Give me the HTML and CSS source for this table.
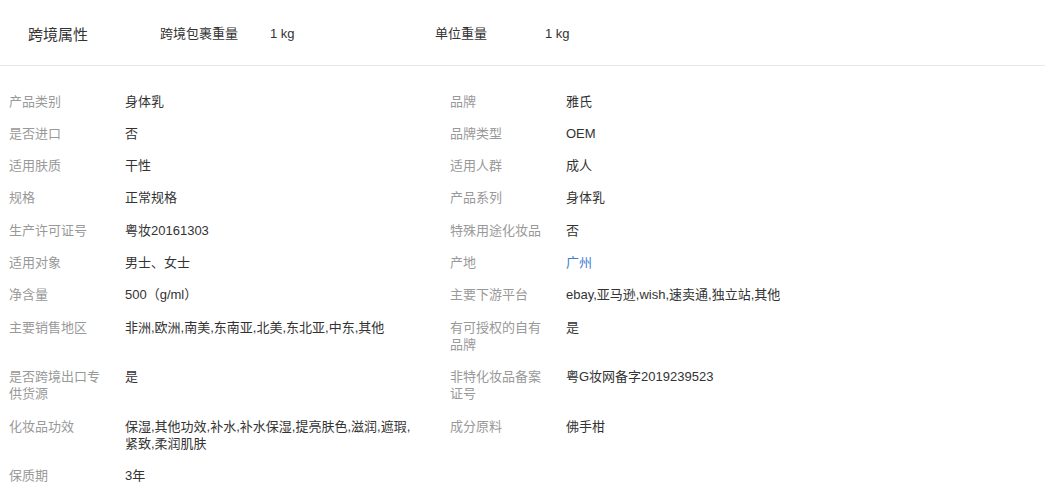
FILE: index.html
```html
<!DOCTYPE html>
<html lang="zh-CN">
<head>
<meta charset="utf-8">
<title>跨境属性</title>
<link rel="stylesheet" href="styles.css">
</head>
<body>
<div class="page">
  <div class="cross-header">
    <div class="cross-title">跨境属性</div>
    <div class="cross-item"><span class="cross-label">跨境包裹重量</span><span class="cross-value">1 kg</span></div>
    <div class="cross-item"><span class="cross-label">单位重量</span><span class="cross-value">1 kg</span></div>
  </div>
  <div class="attrs">
    <div class="k">产品类别</div><div class="v">身体乳</div>
    <div class="k">品牌</div><div class="v">雅氏</div>

    <div class="k">是否进口</div><div class="v">否</div>
    <div class="k">品牌类型</div><div class="v">OEM</div>

    <div class="k">适用肤质</div><div class="v">干性</div>
    <div class="k">适用人群</div><div class="v">成人</div>

    <div class="k">规格</div><div class="v">正常规格</div>
    <div class="k">产品系列</div><div class="v">身体乳</div>

    <div class="k">生产许可证号</div><div class="v">粤妆20161303</div>
    <div class="k">特殊用途化妆品</div><div class="v">否</div>

    <div class="k">适用对象</div><div class="v">男士、女士</div>
    <div class="k">产地</div><div class="v link">广州</div>

    <div class="k">净含量</div><div class="v">500（g/ml）</div>
    <div class="k">主要下游平台</div><div class="v">ebay,亚马逊,wish,速卖通,独立站,其他</div>

    <div class="k">主要销售地区</div><div class="v">非洲,欧洲,南美,东南亚,北美,东北亚,中东,其他</div>
    <div class="k">有可授权的自有品牌</div><div class="v">是</div>

    <div class="k">是否跨境出口专供货源</div><div class="v">是</div>
    <div class="k">非特化妆品备案证号</div><div class="v">粤G妆网备字2019239523</div>

    <div class="k">化妆品功效</div><div class="v">保湿,其他功效,补水,补水保湿,提亮肤色,滋润,遮瑕,紧致,柔润肌肤</div>
    <div class="k">成分原料</div><div class="v">佛手柑</div>

    <div class="k">保质期</div><div class="v">3年</div>
    <div class="k"></div><div class="v"></div>
  </div>
</div>
</body>
</html>
```

FILE: styles.css
```css
html, body {
  margin: 0;
  padding: 0;
  background: #ffffff;
  overflow: hidden;
}

.page {
  font-family: "Liberation Sans", "Noto Sans CJK SC", sans-serif;
  color: #333333;
  font-size: 13px;
}

.cross-header {
  display: flex;
  align-items: center;
  height: 65px;
  border-bottom: 1px solid #e8e8e8;
  padding-left: 28px;
}

.cross-title {
  width: 132px;
  font-size: 15px;
  color: #333333;
  padding-top: 1px;
}

.cross-item {
  display: flex;
  align-items: baseline;
  width: 275px;
}

.cross-label {
  width: 110px;
  flex: none;
  color: #333333;
}

.cross-value {
  color: #333333;
}

.attrs {
  display: grid;
  grid-template-columns: 116px 325px 116px 325px;
  padding: 19px 0 0 9px;
  line-height: 17.3px;
}

.k,
.v {
  padding: 7.5px 16px 7.5px 0;
}

.v {
  padding-right: 30px;
}

.k {
  color: #999999;
}

.v {
  color: #333333;
}

.v.link {
  color: #3a7bd5;
}
```
